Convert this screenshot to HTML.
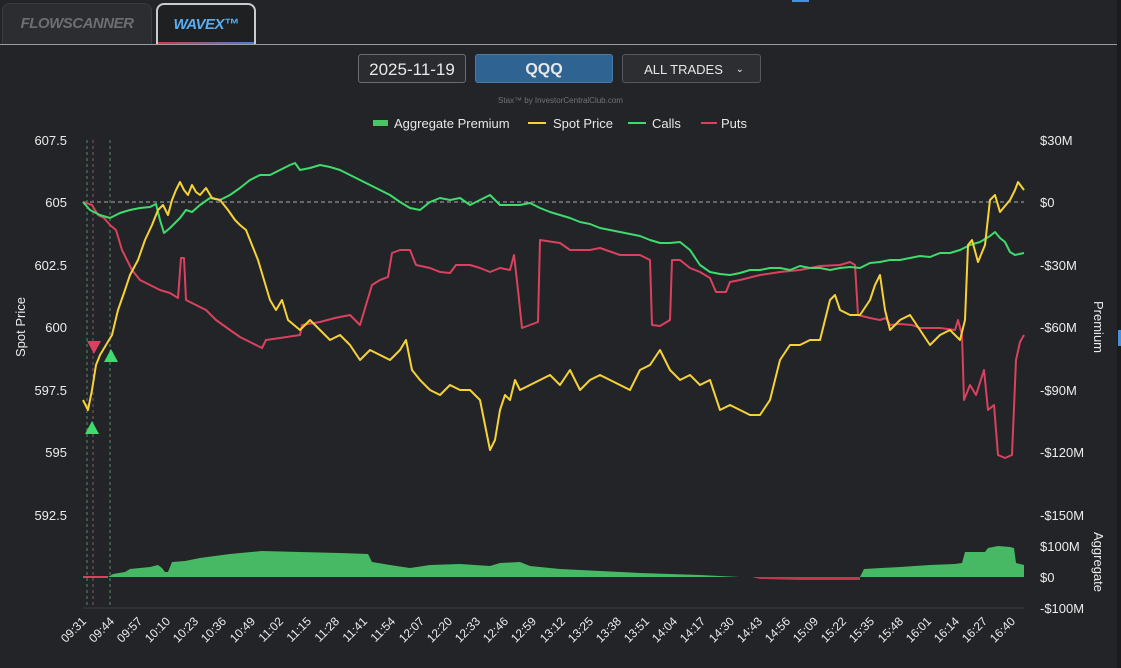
<!DOCTYPE html>
<html><head><meta charset="utf-8"><style>
html,body{margin:0;padding:0;background:#222427;width:1121px;height:668px;overflow:hidden;font-family:"Liberation Sans",sans-serif;}
.tab{position:absolute;top:3px;height:40px;border-radius:8px 8px 0 0;font-style:italic;font-weight:bold;font-size:15px;line-height:40px;text-align:center;letter-spacing:-0.5px}
.box{position:absolute;top:54px;height:29px;border-radius:3px;color:#e8e8e8;text-align:center;line-height:29px;box-sizing:border-box}
</style></head><body>
<div class="tab" style="left:2px;width:148px;background:#2b2d30;border:1px solid #3a3c40;color:#6b6e73">FLOWSCANNER</div>
<div class="tab" style="left:156px;width:96px;background:#1e2022;border:2px solid #c8cbd0;border-bottom:none;color:#5aaef0">WAVEX™<div style="position:absolute;left:0;right:0;bottom:0;height:3px;background:linear-gradient(90deg,#d03a4a,#4a7fd0)"></div></div>
<div style="position:absolute;left:0;top:44px;width:1121px;height:1px;background:#9a9da2"></div>
<div style="position:absolute;left:792px;top:0;width:17px;height:2px;background:#4a90d9"></div>
<div style="position:absolute;left:1117px;top:0;width:4px;height:668px;background:#1a1b1d"></div>
<div style="position:absolute;left:1118px;top:330px;width:3px;height:16px;background:#4a90d9"></div>
<div class="box" style="left:358px;width:108px;border:1px solid #6a6d72;background:#2a2c2f;font-size:17px">2025-11-19</div>
<div class="box" style="left:475px;width:138px;border:1px solid #4b7ba6;background:#2f6391;font-weight:bold;font-size:16px">QQQ</div>
<div class="box" style="left:622px;width:139px;border:1px solid #55585d;background:#2c2e31;font-size:13px;padding-right:16px">ALL TRADES<span style="position:absolute;right:16px;font-size:10px">&#8964;</span></div>
<div style="position:absolute;left:0;width:1121px;top:96px;text-align:center;font-size:8px;color:#6f7277">Stax™ by InvestorCentralClub.com</div>
<svg width="1121" height="668" style="position:absolute;left:0;top:0" font-family="Liberation Sans, sans-serif">
<g font-size="13" fill="#e8e8e8">
<rect x="373" y="120" width="15" height="6" fill="#4cc465"/><text x="394" y="128">Aggregate Premium</text>
<line x1="528" y1="123" x2="546" y2="123" stroke="#f5d238" stroke-width="2"/><text x="553" y="128">Spot Price</text>
<line x1="628" y1="123" x2="646" y2="123" stroke="#3ddc6c" stroke-width="2"/><text x="652" y="128">Calls</text>
<line x1="701" y1="123" x2="717" y2="123" stroke="#d9425e" stroke-width="2"/><text x="721" y="128">Puts</text>
</g>
<g font-size="13" fill="#ececec" text-anchor="end">
<text x="67" y="145">607.5</text><text x="67" y="207">605</text><text x="67" y="270">602.5</text><text x="67" y="332">600</text><text x="67" y="395">597.5</text><text x="67" y="457">595</text><text x="67" y="520">592.5</text>
</g>
<g font-size="13" fill="#ececec">
<text x="1040" y="145">$30M</text><text x="1040" y="207">$0</text><text x="1040" y="270">-$30M</text><text x="1040" y="332">-$60M</text><text x="1040" y="395">-$90M</text><text x="1040" y="457">-$120M</text><text x="1040" y="520">-$150M</text>
<text x="1040" y="551">$100M</text><text x="1040" y="582">$0</text><text x="1040" y="613">-$100M</text>
</g>
<text transform="translate(25,327) rotate(-90)" text-anchor="middle" font-size="13" fill="#ececec">Spot Price</text>
<text transform="translate(1094,327) rotate(90)" text-anchor="middle" font-size="13" fill="#ececec">Premium</text>
<text transform="translate(1094,562) rotate(90)" text-anchor="middle" font-size="13" fill="#ececec">Aggregate</text>
<line x1="83" y1="608" x2="1024" y2="608" stroke="#3a3c40"/>
<line x1="83" y1="202" x2="1024" y2="202" stroke="#aaaaaa" stroke-dasharray="4,3"/>
<g stroke="#5e8a6a" stroke-dasharray="3,3"><line x1="87" y1="140" x2="87" y2="607"/><line x1="110" y1="140" x2="110" y2="607"/></g>
<line x1="93" y1="140" x2="93" y2="607" stroke="#8a5a62" stroke-dasharray="3,3"/>
<polygon fill="#47b964" points="83,577 108,577 113,574 125,572 130,569 150,567 158,565 162,568 165,572 168,572 172,562 185,561 200,558 230,554 262,551 300,552 340,553 368,554 372,562 390,565 410,568 430,565 460,564 490,566 500,563 520,562 530,566 560,569 600,571 640,573 700,575 740,577 760,577 860,577 864,569 900,567 930,565 955,564 962,563 965,552 985,552 988,548 998,546 1010,547 1014,548 1016,563 1024,565 1024,577"/>
<polyline fill="none" stroke="#d9425e" stroke-width="2" points="83,577 108,577 M"/>
<polygon fill="#c2374f" points="752,577 860,577 860,580 800,580 760,579"/>
<polyline fill="none" stroke="#d9425e" stroke-width="2" stroke-linejoin="round" points="83,202 92,205 98,215 104,218 110,225 116,230 122,250 128,262 132,270 140,280 150,285 160,290 170,293 178,298 181,258 184,258 186,300 196,305 206,310 216,320 230,330 240,337 252,343 262,348 266,340 280,338 300,335 302,325 320,322 335,318 350,315 360,325 366,305 372,285 380,280 388,277 392,253 400,250 410,250 416,265 430,268 440,272 450,273 456,265 470,265 480,268 490,272 500,268 510,270 514,255 518,290 522,328 530,325 538,322 540,240 560,243 570,250 590,250 600,248 620,255 640,255 650,260 652,325 660,326 670,320 672,260 680,260 690,268 700,272 710,278 716,292 726,292 730,282 740,280 760,275 780,272 800,270 820,266 840,265 850,262 855,265 858,315 870,318 880,320 886,318 890,325 900,324 912,325 920,328 940,328 955,330 958,320 962,335 964,400 970,385 976,395 984,370 988,410 994,405 998,455 1005,458 1012,455 1016,360 1020,342 1024,335"/>
<polyline fill="none" stroke="#3ddc6c" stroke-width="2" stroke-linejoin="round" points="83,202 90,210 100,215 110,218 120,213 130,210 140,208 150,207 156,204 160,220 164,233 170,228 180,218 186,210 192,212 200,205 210,198 220,200 230,195 240,188 250,180 260,175 270,175 280,170 290,165 295,163 300,170 310,168 320,165 330,167 340,170 350,175 360,180 370,185 380,190 390,195 400,202 410,208 420,210 430,202 440,198 450,200 460,198 470,205 480,200 490,195 500,205 510,205 520,205 530,203 540,208 550,212 560,215 570,218 580,222 590,224 600,228 610,230 620,232 630,234 640,236 650,240 660,243 670,243 680,242 690,250 700,265 710,272 720,274 730,275 740,273 750,270 760,270 770,268 780,268 790,270 800,266 810,268 820,268 830,270 840,268 850,267 860,268 870,263 880,262 890,260 900,260 910,258 920,256 930,257 940,253 950,253 960,250 970,245 980,242 990,236 995,232 1000,238 1005,242 1010,252 1015,255 1024,253"/>
<polyline fill="none" stroke="#f5d238" stroke-width="2" stroke-linejoin="round" points="83,400 88,410 92,390 96,365 100,355 106,345 112,335 118,310 125,290 130,275 138,260 145,240 152,225 158,210 163,205 168,215 172,200 176,190 180,182 184,190 188,195 192,185 196,192 200,195 206,188 212,198 220,200 228,210 235,220 240,225 246,230 252,245 258,260 264,280 270,300 276,310 282,300 288,320 294,325 300,330 310,320 320,330 330,340 340,335 350,345 360,360 370,350 380,355 390,360 400,350 406,340 412,370 420,380 430,390 440,395 450,385 460,390 470,390 480,400 486,430 490,450 495,440 500,410 505,395 510,400 515,380 520,390 530,385 540,380 550,375 560,385 570,370 580,390 590,380 600,375 610,380 620,385 630,390 640,370 650,365 660,350 670,370 680,380 690,375 700,385 710,380 720,410 730,405 740,410 750,415 760,415 770,400 775,380 780,360 790,345 800,345 810,340 820,340 825,320 830,300 835,295 840,310 850,315 860,315 870,300 875,285 880,275 885,310 890,330 900,320 910,315 920,330 930,345 940,335 950,330 960,340 965,320 968,245 972,240 978,262 985,245 990,200 995,195 1000,212 1010,200 1015,190 1018,182 1024,190"/>
<polygon points="87,341 101,341 94,354" fill="#d9425e"/>
<polygon points="85,434 99,434 92,421" fill="#3ddc6c"/>
<polygon points="104,362 118,362 111,349" fill="#3ddc6c"/>
<g font-size="12" fill="#ececec" text-anchor="end">
<text transform="translate(87,622) rotate(-45)">09:31</text>
<text transform="translate(115,622) rotate(-45)">09:44</text>
<text transform="translate(143,622) rotate(-45)">09:57</text>
<text transform="translate(171,622) rotate(-45)">10:10</text>
<text transform="translate(199,622) rotate(-45)">10:23</text>
<text transform="translate(227,622) rotate(-45)">10:36</text>
<text transform="translate(256,622) rotate(-45)">10:49</text>
<text transform="translate(284,622) rotate(-45)">11:02</text>
<text transform="translate(312,622) rotate(-45)">11:15</text>
<text transform="translate(340,622) rotate(-45)">11:28</text>
<text transform="translate(368,622) rotate(-45)">11:41</text>
<text transform="translate(396,622) rotate(-45)">11:54</text>
<text transform="translate(425,622) rotate(-45)">12:07</text>
<text transform="translate(453,622) rotate(-45)">12:20</text>
<text transform="translate(481,622) rotate(-45)">12:33</text>
<text transform="translate(509,622) rotate(-45)">12:46</text>
<text transform="translate(537,622) rotate(-45)">12:59</text>
<text transform="translate(566,622) rotate(-45)">13:12</text>
<text transform="translate(594,622) rotate(-45)">13:25</text>
<text transform="translate(622,622) rotate(-45)">13:38</text>
<text transform="translate(650,622) rotate(-45)">13:51</text>
<text transform="translate(678,622) rotate(-45)">14:04</text>
<text transform="translate(706,622) rotate(-45)">14:17</text>
<text transform="translate(735,622) rotate(-45)">14:30</text>
<text transform="translate(763,622) rotate(-45)">14:43</text>
<text transform="translate(791,622) rotate(-45)">14:56</text>
<text transform="translate(819,622) rotate(-45)">15:09</text>
<text transform="translate(847,622) rotate(-45)">15:22</text>
<text transform="translate(875,622) rotate(-45)">15:35</text>
<text transform="translate(904,622) rotate(-45)">15:48</text>
<text transform="translate(932,622) rotate(-45)">16:01</text>
<text transform="translate(960,622) rotate(-45)">16:14</text>
<text transform="translate(988,622) rotate(-45)">16:27</text>
<text transform="translate(1016,622) rotate(-45)">16:40</text>
</g>
</svg>
</body></html>
